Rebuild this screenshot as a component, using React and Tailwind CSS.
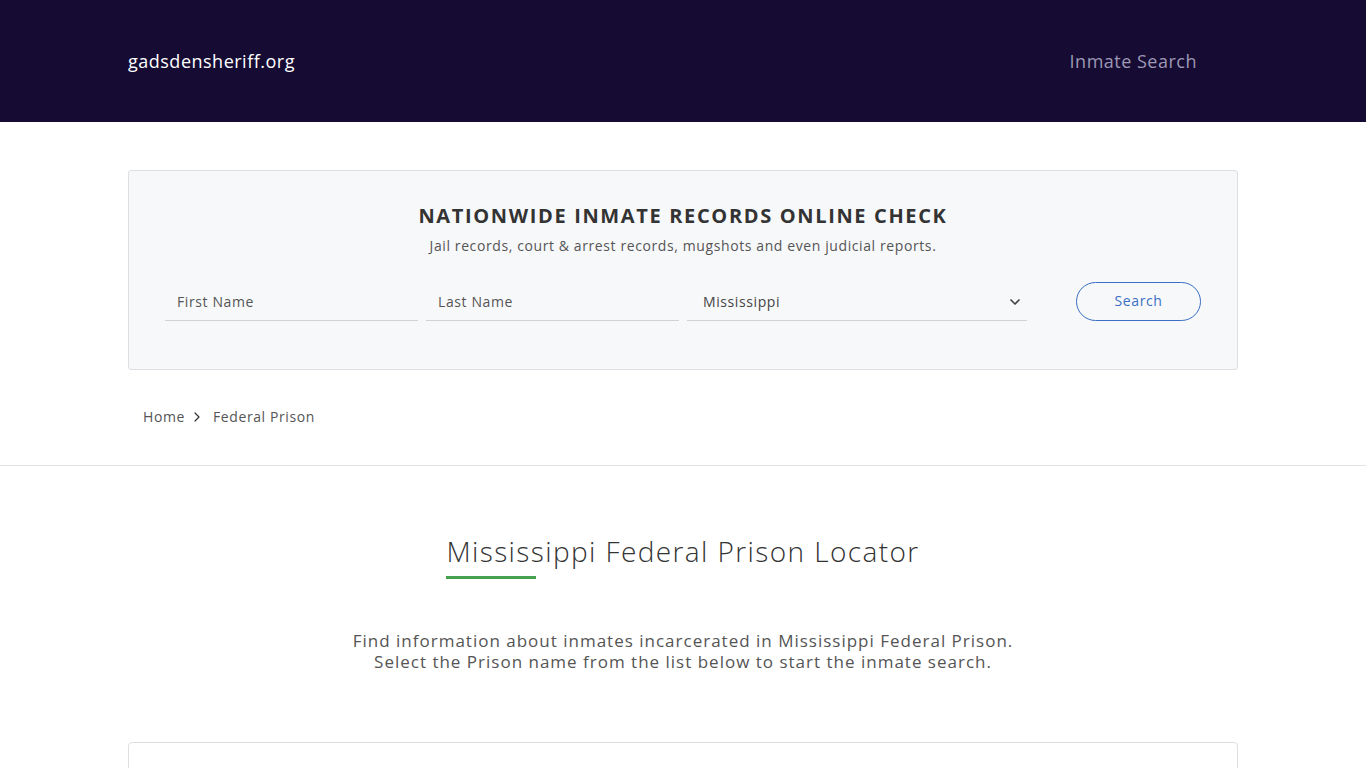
import { ChevronDown, ChevronRight } from 'lucide-react';

const font = { fontFamily: '"Open Sans", "Liberation Sans", sans-serif' };

const Header = () => (
  <header className="bg-[#150b33] h-[122px]">
    <div className="mx-auto w-[1110px] h-full flex items-center justify-between">
      <a href="#" className="text-[18px] text-white tracking-[0.5px]">
        gadsdensheriff.org
      </a>
      <nav className="pr-[41px]">
        <a href="#" className="text-[18px] text-[#9e98b4] tracking-[0.5px]">
          Inmate Search
        </a>
      </nav>
    </div>
  </header>
);

const SearchBox = () => {
  const inputClasses =
    'h-[38px] bg-transparent border-b border-[#cfd2d6] px-3 text-[14px] text-[#444] placeholder-[#555] tracking-[0.6px] focus:outline-none';
  return (
    <div className="mx-auto w-[1110px] mt-12 bg-[#f7f8fa] border border-[#dddfe2] rounded-[3px] pt-[30px] pb-[48px]">
      <h2 className="text-center text-[20px] font-bold text-[#333] tracking-[1.65px]">
        NATIONWIDE INMATE RECORDS ONLINE CHECK
      </h2>
      <p className="text-center text-[14px] text-[#555] mt-[4px] tracking-[0.6px]">
        Jail records, court &amp; arrest records, mugshots and even judicial reports.
      </p>
      <form className="flex items-end mt-[26px] pl-[36px]">
        <input className={`${inputClasses} w-[253px]`} placeholder="First Name" />
        <input className={`${inputClasses} w-[253px] ml-2`} placeholder="Last Name" />
        <div className={`${inputClasses} w-[340px] ml-2 flex items-center justify-between pl-4 pr-[4px]`}>
          <span>Mississippi</span>
          <ChevronDown className="w-4 h-4 text-[#444]" strokeWidth={2.5} />
        </div>
        <button
          type="button"
          className="ml-[49px] w-[125px] h-[39px] rounded-full border border-[#3b6fc4] text-[#3b6fc4] text-[14px] tracking-[0.6px] flex items-center justify-center pb-[2px]"
        >
          Search
        </button>
      </form>
    </div>
  );
};

const Breadcrumb = () => (
  <div className="mx-auto w-[1110px] pl-[15px] pt-[36px] pb-[38px] flex items-center text-[14px] text-[#555] tracking-[0.6px]">
    <a href="#">Home</a>
    <ChevronRight className="w-4 h-4 mx-[4px] text-[#333]" strokeWidth={1.8} />
    <span className="ml-[4px]">Federal Prison</span>
  </div>
);

export default function App() {
  return (
    <div className="min-h-screen bg-white" style={font}>
      <Header />
      <SearchBox />
      <Breadcrumb />
      <div className="border-t border-[#e3e3e3]" />
      <section className="mx-auto w-[1110px] pt-[67px] flex flex-col items-center">
        <div>
          <h1 className="text-[28px] font-light text-[#333] leading-[36px] tracking-[1.4px]">
            Mississippi Federal Prison Locator
          </h1>
          <div className="w-[90px] h-[3px] bg-[#45a34f] mt-[7px]" />
        </div>
        <p className="text-center text-[17px] text-[#555] leading-[21px] mt-[51px] tracking-[1px]">
          Find information about inmates incarcerated in Mississippi Federal Prison.
          <br />
          Select the Prison name from the list below to start the inmate search.
        </p>
        <div className="w-full h-[120px] mt-[70px] border border-[#dedede] rounded-t-[4px]" />
      </section>
    </div>
  );
}
